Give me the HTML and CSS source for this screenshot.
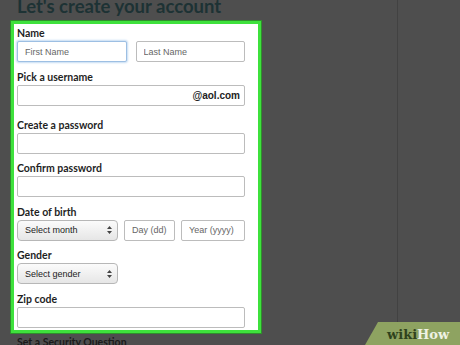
FILE: index.html
```html
<!DOCTYPE html>
<html lang="en">
<head>
    <meta charset="UTF-8">
    <meta name="viewport" content="width=device-width, initial-scale=1.0">
    <title>Let's create your account</title>
    <link rel="stylesheet" href="styles.css">
</head>
<body>
    <div class="screen">
        <main class="page">
            <h1 class="title">Let's create your account</h1>

            <form class="signup">
                <div class="field">
                    <label>Name</label>
                    <div class="pair">
                        <input type="text" class="focused" placeholder="First Name">
                        <input type="text" placeholder="Last Name">
                    </div>
                </div>

                <div class="field field-wide">
                    <label>Pick a username</label>
                    <div class="username">
                        <input type="text">
                        <span class="domain">@aol.com</span>
                    </div>
                </div>

                <div class="field">
                    <label>Create a password</label>
                    <input type="password">
                </div>

                <div class="field">
                    <label>Confirm password</label>
                    <input type="password">
                </div>

                <div class="field">
                    <label>Date of birth</label>
                    <div class="dob">
                        <div class="select">
                            <span>Select month</span>
                            <svg width="5" height="8" viewBox="0 0 5 8"><path d="M2.5 0L5 3H0z M2.5 8L0 5h5z" fill="#444"/></svg>
                        </div>
                        <input type="text" placeholder="Day (dd)">
                        <input type="text" placeholder="Year (yyyy)">
                    </div>
                </div>

                <div class="field">
                    <label>Gender</label>
                    <div class="select select-short">
                        <span>Select gender</span>
                        <svg width="5" height="8" viewBox="0 0 5 8"><path d="M2.5 0L5 3H0z M2.5 8L0 5h5z" fill="#444"/></svg>
                    </div>
                </div>

                <div class="field">
                    <label>Zip code</label>
                    <input type="text">
                </div>
            </form>

            <p class="next">Set a Security Question</p>
        </main>
        <div class="side"></div>
    </div>

    <div class="badge"><span class="wiki">wiki</span><span class="how">How</span></div>
</body>
</html>
```

FILE: styles.css
```css
body {
    margin: 0;
    background: #4e4e4e;
    font-family: "Liberation Sans", Arial, sans-serif;
    overflow: hidden;
}

.screen {
    display: flex;
    height: 345px;
    overflow: hidden;
}

.page {
    width: 398px;
    border-right: 1px solid #424242;
    box-sizing: border-box;
}

.side { flex: 1; }

.title {
    margin: -5px 0 3px 0;
    padding-left: 17px;
    font-family: Lato, sans-serif;
    font-weight: 700;
    font-size: 18.5px;
    line-height: 23px;
    height: 23px;
    color: #1d3234;
}

.signup {
    margin: 0 0 0 11px;
    width: 250px;
    box-sizing: border-box;
    background: #fff;
    border: 3px solid #3ee13c;
    box-shadow: 0 0 0 1px #2f8f2c;
    padding: 2px 13px 2px 3px;
}

.field {
    display: flex;
    flex-direction: column;
    margin-bottom: 7.5px;
}
.field:last-child { margin-bottom: 0; }
.field-wide { margin-bottom: 12px; }

.field label {
    font-family: Lato, sans-serif;
    font-weight: 700;
    font-size: 10.5px;
    line-height: 14px;
    color: #1f1f1f;
    margin-bottom: 1px;
}

input {
    height: 21px;
    box-sizing: border-box;
    border: 1px solid #bcbcbc;
    border-radius: 2px;
    padding: 0 7px;
    font-family: "Liberation Sans", Arial, sans-serif;
    font-size: 9px;
    color: #333;
    background: #fff;
    outline: none;
    min-width: 0;
}
input::placeholder { color: #666; }

input.focused {
    border-color: #9dbfe3;
    box-shadow: 0 0 2px 1px #c5dcf3;
}

.pair {
    display: grid;
    grid-template-columns: 1fr 1fr;
    gap: 9px;
}

.username {
    display: flex;
    align-items: center;
    height: 21px;
    box-sizing: border-box;
    border: 1px solid #bcbcbc;
    border-radius: 2px;
    padding-right: 4px;
}
.username input {
    flex: 1;
    border: none;
    height: 19px;
}
.domain {
    font-weight: 700;
    font-size: 10px;
    color: #222;
}

.dob {
    display: grid;
    grid-template-columns: 101px 51px 1fr;
    gap: 6px;
}

.select {
    display: flex;
    align-items: center;
    justify-content: space-between;
    height: 21px;
    box-sizing: border-box;
    border: 1px solid #b7b7b7;
    border-radius: 4px;
    padding: 0 5px 0 7px;
    background: linear-gradient(#fbfbfb, #e6e6e6);
    font-size: 9px;
    color: #222;
}
.select-short { width: 101px; }

.next {
    margin: 3px 0 0 17px;
    font-family: Lato, sans-serif;
    font-weight: 700;
    font-size: 10.5px;
    color: #1a1a1a;
}

.badge {
    position: absolute;
    right: 0;
    bottom: 0;
    width: 95px;
    height: 23px;
    padding-left: 22px;
    box-sizing: border-box;
    background: #8ea361;
    clip-path: polygon(13px 0, 100% 0, 100% 100%, 0 100%);
    font-family: "DejaVu Serif", serif;
    font-weight: 700;
    font-size: 13px;
    line-height: 25px;
}
.wiki { color: #2f421c; }
.how { color: #eef2e4; }
```
